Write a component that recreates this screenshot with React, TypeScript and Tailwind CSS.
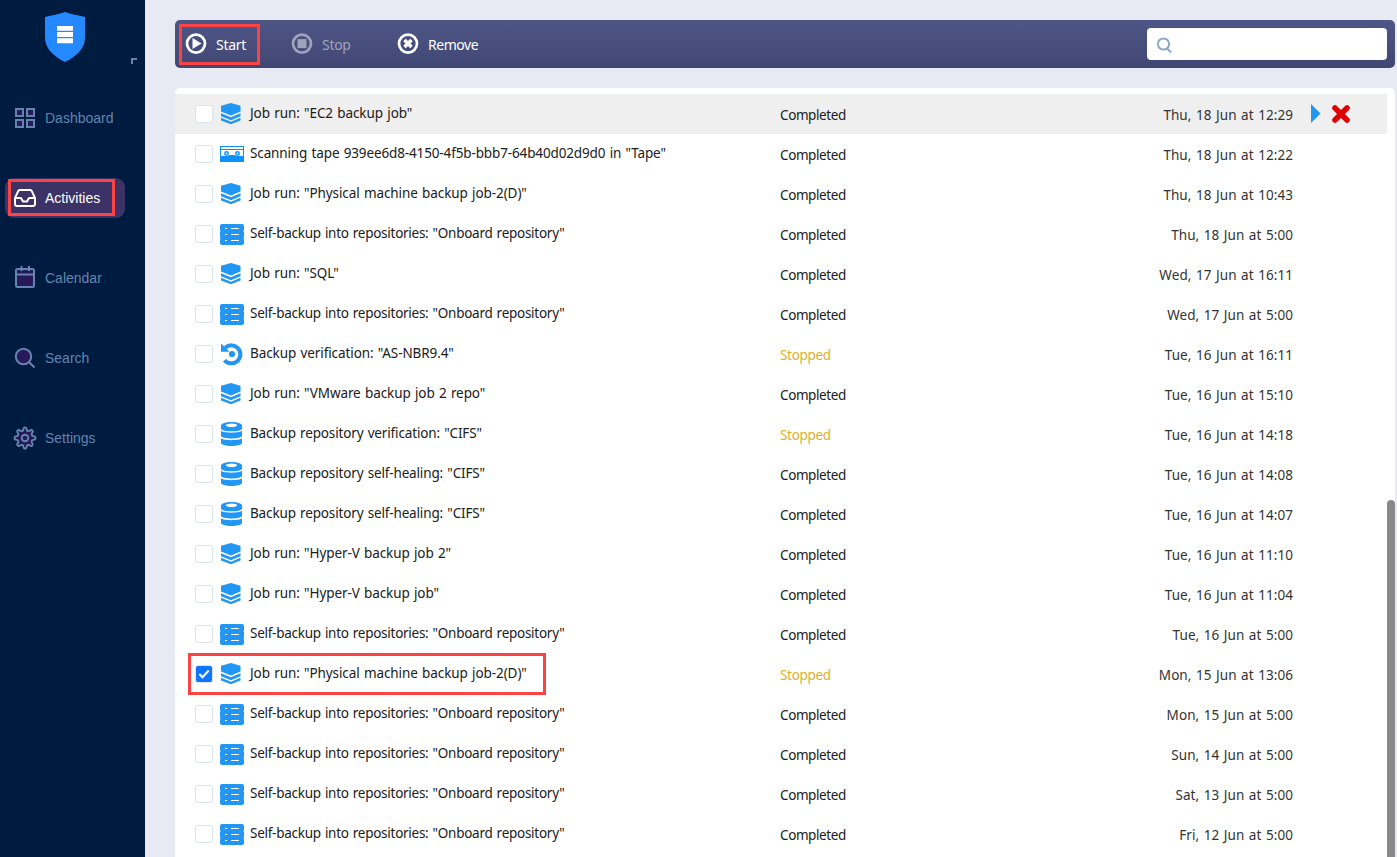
import React from "react";

type Kind = "job" | "tape" | "self" | "verify" | "repo";
type Row = { kind: Kind; title: string; status: "Completed" | "Stopped"; time: string; checked?: boolean; hover?: boolean };

const SELF = 'Self-backup into repositories: "Onboard repository"';

const rows: Row[] = [
  { kind: "job", title: 'Job run: "EC2 backup job"', status: "Completed", time: "Thu, 18 Jun at 12:29", hover: true },
  { kind: "tape", title: 'Scanning tape 939ee6d8-4150-4f5b-bbb7-64b40d02d9d0 in "Tape"', status: "Completed", time: "Thu, 18 Jun at 12:22" },
  { kind: "job", title: 'Job run: "Physical machine backup job-2(D)"', status: "Completed", time: "Thu, 18 Jun at 10:43" },
  { kind: "self", title: SELF, status: "Completed", time: "Thu, 18 Jun at 5:00" },
  { kind: "job", title: 'Job run: "SQL"', status: "Completed", time: "Wed, 17 Jun at 16:11" },
  { kind: "self", title: SELF, status: "Completed", time: "Wed, 17 Jun at 5:00" },
  { kind: "verify", title: 'Backup verification: "AS-NBR9.4"', status: "Stopped", time: "Tue, 16 Jun at 16:11" },
  { kind: "job", title: 'Job run: "VMware backup job 2 repo"', status: "Completed", time: "Tue, 16 Jun at 15:10" },
  { kind: "repo", title: 'Backup repository verification: "CIFS"', status: "Stopped", time: "Tue, 16 Jun at 14:18" },
  { kind: "repo", title: 'Backup repository self-healing: "CIFS"', status: "Completed", time: "Tue, 16 Jun at 14:08" },
  { kind: "repo", title: 'Backup repository self-healing: "CIFS"', status: "Completed", time: "Tue, 16 Jun at 14:07" },
  { kind: "job", title: 'Job run: "Hyper-V backup job 2"', status: "Completed", time: "Tue, 16 Jun at 11:10" },
  { kind: "job", title: 'Job run: "Hyper-V backup job"', status: "Completed", time: "Tue, 16 Jun at 11:04" },
  { kind: "self", title: SELF, status: "Completed", time: "Tue, 16 Jun at 5:00" },
  { kind: "job", title: 'Job run: "Physical machine backup job-2(D)"', status: "Stopped", time: "Mon, 15 Jun at 13:06", checked: true },
  { kind: "self", title: SELF, status: "Completed", time: "Mon, 15 Jun at 5:00" },
  { kind: "self", title: SELF, status: "Completed", time: "Sun, 14 Jun at 5:00" },
  { kind: "self", title: SELF, status: "Completed", time: "Sat, 13 Jun at 5:00" },
  { kind: "self", title: SELF, status: "Completed", time: "Fri, 12 Jun at 5:00" },
];

const titleTracking: Record<Kind, string> = {
  job: "tracking-[-0.09px]",
  tape: "tracking-[-0.13px]",
  self: "tracking-[-0.27px]",
  verify: "tracking-[-0.09px]",
  repo: "tracking-[-0.15px]",
};

function RowIcon({ kind }: { kind: Kind }) {
  return (
    <svg viewBox="0 0 24 24" className="h-6 w-6 shrink-0" fill="#2196f3">
      {kind === "job" && (
        <>
          <path d="M11 1 20.5 3.8V9.600L11 13.600 1 9.600V3.800Z" />
          <path d="M1 11.200 11 15.300l9.500-4.100v3L11 18.200 1 14.200Z" />
          <path d="M1 15.700 11 19.800l9.500-4.100v2.900L11 22.200 1 18.600Z" />
        </>
      )}
      {kind === "tape" && (
        <g fill="#0d92fb">
          <path d="M0 4h24v16H0Z" />
          <path d="M1 5h22v2H1ZM1 8h22v6H1Z" fill="#fff" />
          <circle cx="6.500" cy="11.500" r="1.700" fill="none" stroke="#0d92fb" strokeWidth="1.500" />
          <circle cx="17.500" cy="11.500" r="1.700" fill="none" stroke="#0d92fb" strokeWidth="1.500" />
          <path d="M8.500 13h7v1h-7Z" />
        </g>
      )}
      {kind === "self" && (
        <>
          <path d="M2 2h20a2 2 0 0 1 2 2v4l-.6 1 .6 1v5l-.6 1 .6 1v4a2 2 0 0 1-2 2H2a2 2 0 0 1-2-2v-4l.6-1-.6-1v-5l.6-1-.6-1V4a2 2 0 0 1 2-2Z" />
          <path d="M5 6h2v1H5ZM11 6h8v1h-8ZM5 12h2v1H5ZM11 12h8v1h-8ZM5 18h2v1H5ZM11 18h8v1h-8Z" fill="#fff" />
        </>
      )}
      {kind === "verify" && (
        <>
          <path d="M5.200 5.800A9 9 0 1 1 4.500 18.200" fill="none" stroke="#2196f3" strokeWidth="4" />
          <path d="M1 1.500v8.300h8.600Z" />
          <circle cx="12" cy="12" r="3.100" />
        </>
      )}
      {kind === "repo" && (
        <>
          <path d="M1 3.800C1-1.200 22-1.200 22 3.800V6.500C22 10.300 1 10.300 1 6.500Z" />
          <ellipse cx="11.500" cy="3.200" rx="5.600" ry="1.700" fill="#fff" />
          <path d="M1 8.800c2.500 2.500 18.500 2.500 21 0v5.300c-1 3.300-20 3.300-21 0Z" />
          <path d="M1 16.300c2.500 2.500 18.500 2.500 21 0V21c-1 4-20 4-21 0Z" />
        </>
      )}
    </svg>
  );
}

function Checkbox({ checked }: { checked?: boolean }) {
  if (checked)
    return (
      <span className="flex h-[18px] w-[18px] shrink-0 items-center justify-center rounded-[3px] border border-[#dbe4f3] bg-[#0d75ff]">
        <svg viewBox="0 0 16 16" className="h-4 w-4" fill="none" stroke="#fff" strokeWidth="2">
          <path d="m3.300 8 3.200 3.200 6.200-6.700" />
        </svg>
      </span>
    );
  return <span className="h-[18px] w-[18px] shrink-0 rounded-[3px] border border-[#dbe3ee] bg-white" />;
}

const navItems = [
  {
    label: "Dashboard",
    icon: (
      <g fill="#27195a" stroke="currentColor" strokeWidth="2">
        <path d="M3 3h7v7H3ZM14 3h7v7h-7ZM3 14h7v7H3ZM14 14h7v7h-7Z" />
      </g>
    ),
  },
  {
    label: "Activities",
    active: true,
    icon: (
      <g fill="none" stroke="currentColor" strokeWidth="2" strokeLinejoin="round">
        <path d="M2 12 5.300 4.800A2 2 0 0 1 7 4h10a2 2 0 0 1 1.700.8L22 12v6a2 2 0 0 1-2 2H4a2 2 0 0 1-2-2Z" />
        <path d="M2 12h6l2 3.500h4l2-3.500h6" />
      </g>
    ),
  },
  {
    label: "Calendar",
    icon: (
      <g fill="#27195a" stroke="currentColor" strokeWidth="2">
        <rect x="3" y="3" width="18" height="18" rx="1.500" />
        <path d="M3 8.500h18M8.500 0v5M16 0v5" />
      </g>
    ),
  },
  {
    label: "Search",
    icon: (
      <g fill="#27195a" stroke="currentColor" strokeWidth="2">
        <circle cx="10.500" cy="10.500" r="7.700" />
        <path d="m16 16 5.500 5.500" />
      </g>
    ),
  },
  {
    label: "Settings",
    icon: (
      <g fill="#27195a" stroke="currentColor" strokeWidth="1.900" strokeLinejoin="round">
        <path d="M10.300 3.500C10.600.7 13.400.7 13.700 3.500c.2 1.500 1.700 2.100 2.900 1.200 2.200-1.700 4.200.3 2.500 2.500-.9 1.200-.3 2.700 1.200 2.900 2.900.3 2.900 3.500 0 3.800-1.500.2-2.100 1.700-1.200 2.900 1.700 2.200-.3 4.200-2.500 2.500-1.200-.9-2.700-.3-2.900 1.200-.3 2.900-3.100 2.900-3.400 0-.2-1.500-1.700-2.100-2.900-1.200-2.200 1.700-4.200-.3-2.500-2.500.9-1.200.3-2.700-1.200-2.900-2.900-.3-2.900-3.500 0-3.800 1.500-.2 2.100-1.700 1.200-2.900-1.700-2.200.3-4.200 2.500-2.500 1.200.9 2.700.3 2.900-1.200Z" />
        <circle cx="12" cy="12" r="3.300" />
      </g>
    ),
  },
];

function Sidebar() {
  return (
    <nav className="flex w-[145px] shrink-0 flex-col bg-[#001b40] font-['Liberation_Sans',Arial,sans-serif]">
      <div className="relative flex h-[98px] shrink-0 justify-center pt-[11px] pr-[15px]">
        <svg viewBox="0 0 42 52" className="h-[52px] w-[42px]">
          <path d="M21 1c6 2 13 3.500 20 5v21c0 10-9 19-20 24C10 46 1 37 1 27V6c7-1.500 14-3 20-5Z" fill="#2489ff" />
          <path d="M13 15h16v4.700H13ZM13 21h16v5H13ZM13 27.300h16v5H13Z" fill="#fff" />
        </svg>
        <span className="absolute left-[131px] top-[58px] h-1.5 w-1.5 border-l-2 border-t-2 border-[#6385ad]" />
      </div>
      <ul className="flex flex-col gap-10 pl-[5px]">
        {navItems.map((n) => (
          <li
            key={n.label}
            className={
              n.active
                ? "relative flex h-10 w-[120px] items-center gap-2 rounded-[9px] bg-[#3c3265] pl-2 text-white"
                : "flex h-10 w-[120px] items-center gap-2 pl-2 text-[#6385ad]"
            }
          >
            <svg viewBox="0 0 24 24" className="h-6 w-6 shrink-0">
              {n.icon}
            </svg>
            <span className="text-sm leading-5">{n.label}</span>
            {n.active && <span className="absolute left-[3px] top-px h-[37px] w-[107px] border-[3px] border-[#fb4343]" />}
          </li>
        ))}
      </ul>
    </nav>
  );
}

function ToolIcon({ children }: { children: React.ReactNode }) {
  return (
    <svg viewBox="0 0.4 22 22" className="h-[22px] w-[22px] shrink-0">
      <circle cx="11" cy="11" r="9" fill="none" stroke="currentColor" strokeWidth="2.700" />
      {children}
    </svg>
  );
}

function Toolbar() {
  return (
    <div className="flex h-12 items-center rounded-[5px] bg-linear-to-b from-[#4e5685] to-[#414775] pl-2.5 pr-2 text-sm text-white">
      <div className="relative flex w-[106px] items-start gap-[9px]">
        <ToolIcon>
          <path d="M7.500 5.500v11l9-5.500Z" fill="currentColor" />
        </ToolIcon>
        <span className="pt-0.5 leading-5 tracking-[-0.300px]">Start</span>
        <span className="absolute -left-1.5 -top-[9px] h-[41px] w-[81px] border-[3px] border-[#fb4343]" />
      </div>
      <div className="flex w-[106px] items-start gap-[9px] text-[#a0a3ba]">
        <ToolIcon>
          <path d="M6.500 6.500h9v9h-9Z" fill="currentColor" />
        </ToolIcon>
        <span className="pt-0.5 leading-5 tracking-[-0.300px]">Stop</span>
      </div>
      <div className="flex items-start gap-[9px]">
        <ToolIcon>
          <path d="m7.500 7.500 7 7m0-7-7 7" stroke="currentColor" strokeWidth="3.600" />
        </ToolIcon>
        <span className="pt-0.5 leading-5 tracking-[-0.450px]">Remove</span>
      </div>
      <div className="ml-auto flex h-8 w-60 items-center rounded bg-white pl-[9px] pt-px">
        <svg viewBox="0 0 18 18" className="h-[18px] w-[18px]" fill="none" stroke="#8ba8c9" strokeWidth="2">
          <circle cx="7.500" cy="8" r="5.600" />
          <path d="m11 12.500 4.200 4" />
        </svg>
      </div>
    </div>
  );
}

export default function App() {
  return (
    <div className="flex h-[857px] w-[1397px] overflow-hidden bg-[#e7eaf2] font-['Noto_Sans',Tahoma,sans-serif]">
      <Sidebar />
      <main className="flex w-[1250px] flex-col gap-5 pl-[30px] pt-5">
        <Toolbar />
        <section className="flex min-h-0 flex-1 overflow-hidden rounded-t-[5px] bg-white pt-1.5 text-[13.5px] leading-5 [word-spacing:0.9px]">
          <div className="flex w-[1212px] flex-col">
            {rows.map((r, i) => (
              <div key={i} className={r.hover ? "relative flex h-10 shrink-0 items-center bg-[#efefef] pl-5" : "relative flex h-10 shrink-0 items-center pl-5"}>
                <Checkbox checked={r.checked} />
                <span className="ml-[7px] flex w-[560px] items-center gap-1.5">
                  <RowIcon kind={r.kind} />
                  <span className={"whitespace-pre pb-[3px] text-[#202020] " + titleTracking[r.kind]}>{r.title}</span>
                </span>
                <span
                  className={
                    r.status === "Stopped"
                      ? "w-[213px] pt-px tracking-[-0.3px] text-[#dfb11f]"
                      : "w-[213px] pt-px tracking-[-0.4px] text-[#202020]"
                  }
                >
                  {r.status}
                </span>
                <span className="w-[300px] pt-px text-right tracking-[0.07px] text-[#333]">{r.time}</span>
                {r.hover && (
                  <span className="ml-[17px] flex items-start gap-2.5">
                    <svg viewBox="0 0 11 20" className="h-5 w-[11px]">
                      <path d="M1 0v19l9.500-9.500Z" fill="#2196f3" />
                    </svg>
                    <svg viewBox="0 0 20 20" className="h-5 w-5">
                      <path d="m4 4 12 12M16 4 4 16" stroke="#df0000" strokeWidth="5.600" strokeLinecap="round" />
                    </svg>
                  </span>
                )}
                {r.checked && <span className="absolute left-[13px] -top-px h-[42px] w-[358px] border-[3px] border-[#fb4343]" />}
              </div>
            ))}
          </div>
          <div className="flex w-2 flex-col pt-[406px]">
            <span className="flex-1 rounded-t-full bg-[#888]" />
          </div>
        </section>
      </main>
    </div>
  );
}
